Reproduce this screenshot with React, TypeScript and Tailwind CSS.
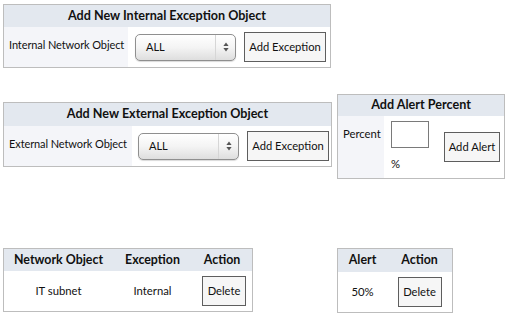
import React from "react";

const font = { fontFamily: "Lato, 'Open Sans', sans-serif" };

function SelectBox() {
  return (
    <div className="relative flex h-[27px] w-[101px] items-center rounded-[5px] border border-[#8f8f8f] bg-gradient-to-b from-[#ffffff] via-[#f4f4f4] to-[#dedede] pl-[10px] text-[11px] text-[#111] shadow-[0_1px_1px_rgba(0,0,0,0.15)]">
      <span className="pt-[1px]">ALL</span>
      <div className="absolute right-[6px] top-0 flex h-full items-center border-l border-[#d6d6d6] pl-[7px]">
        <svg width="6" height="10" viewBox="0 0 6 10">
          <path d="M3 0.5 L5.6 4 L0.4 4 Z" fill="#555" />
          <path d="M3 9.5 L5.6 6 L0.4 6 Z" fill="#555" />
        </svg>
      </div>
    </div>
  );
}

function Btn({ children, className }: { children: React.ReactNode; className: string }) {
  return (
    <div className={"flex items-center justify-center whitespace-nowrap border border-[#5e5e5e] bg-[#f6f6f6] text-[11.2px] text-[#111] " + className}>
      {children}
    </div>
  );
}

function ExceptionTable({ title, label, labelW, selMl, btnMl, width, headerH }: { title: string; label: string; labelW: string; selMl: string; btnMl: string; width: string; headerH: string }) {
  return (
    <div className={"border border-[#bdbdbd] " + width}>
      <div className={"flex items-center justify-center bg-[#e3e8ef] text-[12.6px] font-bold text-[#111] " + headerH}>{title}</div>
      <div className="flex h-[40px]">
        <div className={"whitespace-nowrap bg-[#f4f5f9] pl-[5px] pt-[10px] text-[11px] tracking-[-0.1px] text-[#111] " + labelW}>{label}</div>
        <div className={"flex items-center " + selMl}>
          <SelectBox />
        </div>
        <div className={"flex items-center " + btnMl}>
          <Btn className="h-[30px] w-[82px]">Add Exception</Btn>
        </div>
      </div>
    </div>
  );
}

export default function App() {
  return (
    <div className="flex h-[317px] w-[507px] bg-white text-[#111]" style={font}>
      <div className="ml-[3px] flex flex-col pt-[4px]">
        <ExceptionTable
          title="Add New Internal Exception Object"
          label="Internal Network Object"
          labelW="w-[124px]"
          selMl="ml-[7px]"
          btnMl="ml-[8px]"
          width="w-[328px]"
          headerH="h-[22px]"
        />
        <div className="mt-[34px]">
          <ExceptionTable
            title="Add New External Exception Object"
            label="External Network Object"
            labelW="w-[128px]"
            selMl="ml-[6px]"
            btnMl="ml-[8px]"
            width="w-[329px]"
            headerH="h-[23px]"
          />
        </div>
        <div className="mt-[81px] w-[250px] border border-[#bdbdbd]">
          <div className="flex h-[22px] items-center bg-[#e3e8ef] text-[12.4px] font-bold">
            <div className="w-[109px] text-center">Network Object</div>
            <div className="w-[79px] text-center">Exception</div>
            <div className="w-[60px] text-center">Action</div>
          </div>
          <div className="flex h-[40px] items-center text-[11.3px]">
            <div className="w-[109px] text-center">IT subnet</div>
            <div className="w-[79px] text-center">Internal</div>
            <div className="flex w-[60px] justify-center">
              <Btn className="ml-[4px] h-[30px] w-[44px]">Delete</Btn>
            </div>
          </div>
        </div>
      </div>
      <div className="ml-[5px] flex flex-col pt-[94px]">
        <div className="w-[168px] border border-[#bdbdbd]">
          <div className="flex h-[21px] items-center justify-center bg-[#e3e8ef] text-[12.6px] font-bold">Add Alert Percent</div>
          <div className="flex h-[62px]">
            <div className="w-[46px] bg-[#f4f5f9] pl-[5px] pt-[10px] text-[11.3px]">Percent</div>
            <div className="flex flex-col pl-[7px] pt-[5px]">
              <div className="h-[27px] w-[38px] border border-[#7a7a7a] bg-white" />
              <div className="mt-[8px] text-[11.3px]">%</div>
            </div>
            <div className="ml-[15px] flex items-center">
              <Btn className="h-[30px] w-[56px]">Add Alert</Btn>
            </div>
          </div>
        </div>
        <div className="mt-[69px] w-[116px] border border-[#bdbdbd]">
          <div className="flex h-[23px] items-center bg-[#e3e8ef] text-[12.4px] font-bold">
            <div className="w-[49px] text-center">Alert</div>
            <div className="w-[65px] text-center">Action</div>
          </div>
          <div className="flex h-[40px] items-center text-[11.3px]">
            <div className="w-[49px] text-center">50%</div>
            <div className="flex w-[65px] justify-center">
              <Btn className="h-[30px] w-[44px]">Delete</Btn>
            </div>
          </div>
        </div>
      </div>
    </div>
  );
}
